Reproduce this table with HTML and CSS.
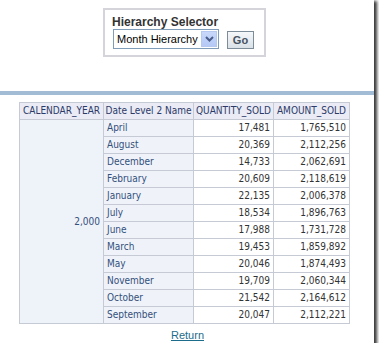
FILE: index.html
```html
<!DOCTYPE html>
<html>
<head>
<meta charset="utf-8">
<link rel="stylesheet" href="styles.css">
</head>
<body>
<div class="page">
  <div class="selector">
    <div class="sel-title">Hierarchy Selector</div>
    <div class="sel-controls">
      <div class="dropdown">
        <span class="dd-text">Month Hierarchy</span>
        <span class="dd-btn"><svg width="9" height="6" viewBox="0 0 9 6"><path d="M1 1 L4.5 4.5 L8 1" fill="none" stroke="#4a5d8a" stroke-width="2"/></svg></span>
      </div>
      <button class="go">Go</button>
    </div>
  </div>
  <div class="bar"></div>
  <table class="grid">
    <colgroup><col class="c1"><col class="c2"><col class="c3"><col class="c4"></colgroup>
    <thead>
      <tr><th>CALENDAR_YEAR</th><th>Date Level 2 Name</th><th>QUANTITY_SOLD</th><th>AMOUNT_SOLD</th></tr>
    </thead>
    <tbody>
      <tr><td class="year" rowspan="12">2,000</td><td class="mon">April</td><td class="num">17,481</td><td class="num">1,765,510</td></tr>
      <tr><td class="mon">August</td><td class="num">20,369</td><td class="num">2,112,256</td></tr>
      <tr><td class="mon">December</td><td class="num">14,733</td><td class="num">2,062,691</td></tr>
      <tr><td class="mon">February</td><td class="num">20,609</td><td class="num">2,118,619</td></tr>
      <tr><td class="mon">January</td><td class="num">22,135</td><td class="num">2,006,378</td></tr>
      <tr><td class="mon">July</td><td class="num">18,534</td><td class="num">1,896,763</td></tr>
      <tr><td class="mon">June</td><td class="num">17,988</td><td class="num">1,731,728</td></tr>
      <tr><td class="mon">March</td><td class="num">19,453</td><td class="num">1,859,892</td></tr>
      <tr><td class="mon">May</td><td class="num">20,046</td><td class="num">1,874,493</td></tr>
      <tr><td class="mon">November</td><td class="num">19,709</td><td class="num">2,060,344</td></tr>
      <tr><td class="mon">October</td><td class="num">21,542</td><td class="num">2,164,612</td></tr>
      <tr><td class="mon">September</td><td class="num">20,047</td><td class="num">2,112,221</td></tr>
    </tbody>
  </table>
  <div class="ret"><a href="#">Return</a></div>
</div>
</body>
</html>
```
FILE: styles.css
```css
html, body {
  margin: 0;
  padding: 0;
  background: #ffffff;
}
.page {
  width: 374px;
  height: 343px;
  background: #ffffff;
  box-shadow: 2px 2px 3px 1px #3a3a3a;
  padding-top: 8px;
  box-sizing: border-box;
  overflow: hidden;
  font-family: "Liberation Sans", Arial, sans-serif;
}
.selector {
  margin-left: 103px;
  width: 163px;
  height: 49px;
  box-sizing: border-box;
  border: 2px solid #d4d4da;
  padding: 5px 0 0 7px;
}
.sel-title {
  font-weight: bold;
  font-size: 12px;
  line-height: 14px;
  color: #333333;
}
.sel-controls {
  display: flex;
  align-items: center;
  gap: 8px;
  margin-left: 1px;
}
.dropdown {
  width: 106px;
  height: 20px;
  box-sizing: border-box;
  border: 1px solid #7f9db9;
  background: #fff;
  display: flex;
  align-items: center;
  justify-content: space-between;
  padding: 0 1px 0 3px;
}
.dd-text {
  font-size: 11px;
  color: #000;
}
.dd-btn {
  width: 16px;
  height: 16px;
  box-sizing: border-box;
  background: linear-gradient(#c8d8fb, #b4c9f5);
  border: 1px solid #b5c8f0;
  display: flex;
  align-items: center;
  justify-content: center;
}
.go {
  width: 27px;
  height: 18px;
  box-sizing: border-box;
  border: 1px solid #7d8c99;
  background: linear-gradient(#f6f8fa, #d9e1e7);
  font-family: "Liberation Sans", Arial, sans-serif;
  font-weight: bold;
  font-size: 11px;
  color: #46525f;
  padding: 0;
  margin-top: 1px;
}
.bar {
  margin-top: 34px;
  height: 4px;
  background: #a3bcd6;
}
.grid {
  margin: 7px 0 0 19px;
  border-collapse: collapse;
  table-layout: fixed;
  width: 330px;
  font-family: "DejaVu Sans Condensed", "DejaVu Sans", sans-serif;
  font-stretch: condensed;
  font-size: 10px;
}
.c1 { width: 84px; }
.c2 { width: 90px; }
.c3 { width: 80px; }
.c4 { width: 76px; }
.grid th, .grid td {
  border: 1px solid #c6cad4;
  padding: 1px 3px;
  height: 14px;
  line-height: 14px;
  white-space: nowrap;
  overflow: hidden;
}
.grid th {
  background: #eaebf5;
  color: #2b3a68;
  font-weight: normal;
  text-align: center;
  padding: 1px 0;
}
.grid td.year {
  background: #eef2f9;
  color: #34507c;
  text-align: right;
  vertical-align: middle;
}
.grid td.mon {
  background: #eff3f9;
  color: #34507c;
  text-align: left;
}
.grid td.num {
  background: #ffffff;
  color: #333333;
  text-align: right;
}
.ret {
  text-align: center;
  margin-top: 4px;
  padding-left: 1px;
  font-size: 11px;
  line-height: 14px;
}
.ret a {
  color: #1c6d8c;
  text-decoration: underline;
}
```
